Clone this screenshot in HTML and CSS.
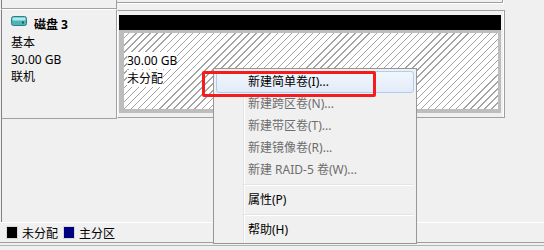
FILE: index.html
```html
<!DOCTYPE html>
<html lang="zh-CN">
<head>
  <meta charset="UTF-8" />
  <title>磁盘管理</title>
  <link rel="stylesheet" href="styles.css">
</head>
<body>
  <div class="prev">
    <div class="prev-info"></div>
    <div class="prev-area"></div>
  </div>

  <div class="row">
    <div class="info">
      <div class="disk-head">
        <svg class="disk-icon" width="16" height="10" viewBox="0 0 16 10">
          <rect x="0.5" y="0.5" width="15" height="9" rx="2" fill="#4cb4b9" stroke="#2a8088"/>
          <rect x="1.5" y="1.5" width="13" height="3" rx="1" fill="#b4e8e8"/>
          <rect x="11" y="5.5" width="2" height="2" fill="#1d5c61"/>
        </svg>
        <b>磁盘 3</b>
      </div>
      <div>基本</div>
      <div>30.00 GB</div>
      <div>联机</div>
    </div>
    <div class="area">
      <div class="disk-bar"></div>
      <div class="part">
        <span>30.00 GB</span><br>
        <span>未分配</span>
      </div>
    </div>
  </div>

  <div class="lower"></div>

  <div class="legend">
    <span class="swatch black"></span>未分配
    <span class="swatch blue"></span>主分区
  </div>
  <div class="footer"></div>

  <div class="menu">
    <div class="item active">新建简单卷(I)...</div>
    <div class="item off">新建跨区卷(N)...</div>
    <div class="item off">新建带区卷(T)...</div>
    <div class="item off">新建镜像卷(R)...</div>
    <div class="item off">新建 RAID-5 卷(W)...</div>
    <div class="sep"></div>
    <div class="item">属性(P)</div>
    <div class="sep"></div>
    <div class="item">帮助(H)</div>
  </div>
  <div class="mark"></div>
</body>
</html>
```

FILE: styles.css
```css
body {
  margin: 0;
  background-color: #f0f0f0;
  font-family: "Noto Sans", "Noto Sans CJK SC", sans-serif;
  font-size: 12px;
  color: #000;
  width: 544px;
  height: 250px;
  overflow: hidden;
}
.prev {
  display: flex;
  height: 9px;
  margin-left: 1px;
}
.prev-info {
  width: 116px;
  box-sizing: border-box;
  border-left: 1px solid #808080;
  border-right: 1px solid #a0a0a0;
  border-bottom: 1px solid #a0a0a0;
}
.prev-area {
  width: 386px;
  height: 3px;
  box-sizing: border-box;
  border-bottom: 1px solid #a0a0a0;
  border-right: 1px solid #a0a0a0;
  box-shadow: 1px 1px 0 #fff;
}
.row {
  display: flex;
  height: 110px;
  margin-left: 1px;
}
.info {
  width: 116px;
  box-sizing: border-box;
  border-left: 1px solid #808080;
  border-right: 1px solid #a0a0a0;
  border-bottom: 1px solid #a0a0a0;
  border-top: 1px solid #fff;
  padding-left: 9px;
  line-height: 17px;
}
.disk-head {
  display: flex;
  margin-top: 6px;
  height: 18px;
  line-height: 18px;
}
.disk-icon {
  margin-right: 7px;
}
.area {
  margin-top: 1px;
  width: 388px;
  height: 108px;
  box-sizing: border-box;
  border: 1px solid #a0a0a0;
  border-left-color: #fff;
  box-shadow: inset -1px 0 0 #fff;
  padding: 4px 3px 0 1px;
}
.disk-bar {
  height: 15px;
  background: #000;
}
.part {
  height: 83px;
  box-sizing: border-box;
  border: 3px solid #bdbdbd;
  border-left-width: 5px;
  border-bottom-width: 4px;
  padding: 19px 0 0 3px;
  line-height: 18px;
  background: repeating-linear-gradient(-45deg, #fff 0, #fff 4px, #a4a4a4 4px, #a4a4a4 5px);
}
.part span {
  background: #fff;
}
.lower {
  height: 103px;
  margin-left: 1px;
  border-left: 1px solid #808080;
}
.legend {
  height: 19px;
  border-top: 1px solid #fff;
  border-bottom: 1px solid #a0a0a0;
  display: flex;
  align-items: center;
  padding-left: 7px;
}
.swatch {
  width: 10px;
  height: 11px;
  margin-right: 5px;
  box-shadow: 0 0 0 1px #d8d8d8;
}
.black {
  background: #000;
}
.blue {
  background: #000080;
  margin-left: 6px;
}
.footer {
  height: 2px;
  border-bottom: 1px solid #b4b4b4;
}
.menu {
  position: absolute;
  left: 213px;
  top: 68px;
  width: 204px;
  height: 176px;
  box-sizing: border-box;
  border: 1px solid #979797;
  padding: 2px;
  background: linear-gradient(to right, transparent 29px, #e2e3e3 29px, #e2e3e3 30px, #fff 30px, #fff 31px, transparent 31px) #f0f0f0;
}
.item {
  height: 22px;
  line-height: 22px;
  padding-left: 32px;
  box-sizing: border-box;
}
.item.off {
  color: #6d6d6d;
}
.item.active {
  border: 1px solid #aecdf2;
  border-radius: 3px;
  background: linear-gradient(to bottom, #f2f7fd, #e2ebf8);
  line-height: 20px;
  padding-left: 31px;
}
.sep {
  height: 8px;
  margin-left: 28px;
  background: linear-gradient(to bottom, transparent 3px, #e2e3e3 3px, #e2e3e3 4px, #fff 4px, #fff 5px, transparent 5px);
}
.mark {
  position: absolute;
  left: 202px;
  top: 71px;
  width: 174px;
  height: 26px;
  box-sizing: border-box;
  border: 3px solid #f41c1c;
  border-radius: 2px;
}
```
